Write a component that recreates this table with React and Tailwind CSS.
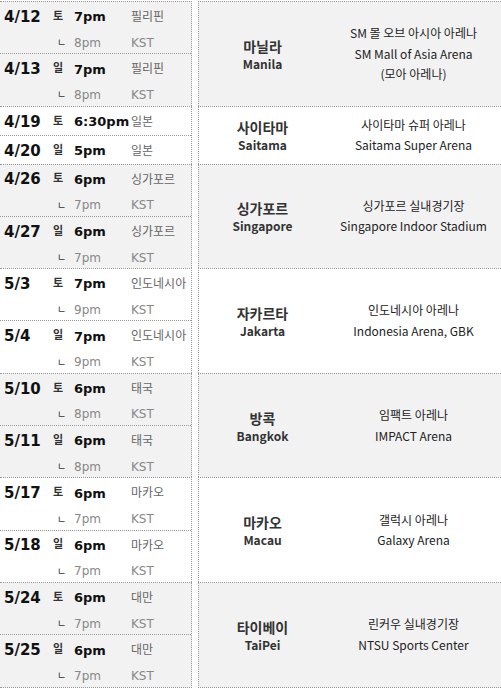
import React from 'react';

const groups = [
  {
    city: '마닐라',
    en: 'Manila',
    venue: ['SM 몰 오브 아시아 아레나', 'SM Mall of Asia Arena', '(모아 아레나)'],
    gray: true,
    rows: [
      { date: '4/12', day: '토', time: '7pm', country: '필리핀', kst: '8pm' },
      { date: '4/13', day: '일', time: '7pm', country: '필리핀', kst: '8pm' },
    ],
  },
  {
    city: '사이타마',
    en: 'Saitama',
    venue: ['사이타마 슈퍼 아레나', 'Saitama Super Arena'],
    rows: [
      { date: '4/19', day: '토', time: '6:30pm', country: '일본' },
      { date: '4/20', day: '일', time: '5pm', country: '일본' },
    ],
  },
  {
    city: '싱가포르',
    en: 'Singapore',
    venue: ['싱가포르 실내경기장', 'Singapore Indoor Stadium'],
    gray: true,
    rows: [
      { date: '4/26', day: '토', time: '6pm', country: '싱가포르', kst: '7pm' },
      { date: '4/27', day: '일', time: '6pm', country: '싱가포르', kst: '7pm' },
    ],
  },
  {
    city: '자카르타',
    en: 'Jakarta',
    venue: ['인도네시아 아레나', 'Indonesia Arena, GBK'],
    rows: [
      { date: '5/3', day: '토', time: '7pm', country: '인도네시아', kst: '9pm' },
      { date: '5/4', day: '일', time: '7pm', country: '인도네시아', kst: '9pm' },
    ],
  },
  {
    city: '방콕',
    en: 'Bangkok',
    venue: ['임팩트 아레나', 'IMPACT Arena'],
    gray: true,
    rows: [
      { date: '5/10', day: '토', time: '6pm', country: '태국', kst: '8pm' },
      { date: '5/11', day: '일', time: '6pm', country: '태국', kst: '8pm' },
    ],
  },
  {
    city: '마카오',
    en: 'Macau',
    venue: ['갤럭시 아레나', 'Galaxy Arena'],
    rows: [
      { date: '5/17', day: '토', time: '6pm', country: '마카오', kst: '7pm' },
      { date: '5/18', day: '일', time: '6pm', country: '마카오', kst: '7pm' },
    ],
  },
  {
    city: '타이베이',
    en: 'TaiPei',
    venue: ['린커우 실내경기장', 'NTSU Sports Center'],
    gray: true,
    rows: [
      { date: '5/24', day: '토', time: '6pm', country: '대만', kst: '7pm' },
      { date: '5/25', day: '일', time: '6pm', country: '대만', kst: '7pm' },
    ],
  },
];

const DateRow = ({ row, first }) => (
  <div className={first ? '' : 'border-t border-dotted border-[#999]'}>
    <div className={`flex items-center pt-[3px] ${row.kst ? 'h-[27px]' : 'h-[28px]'}`}>
      <span className="w-[53px] pl-[4px] text-[15px] font-bold text-[#111]">{row.date}</span>
      <span className="w-[21px] text-[11px] font-bold text-[#333]">{row.day}</span>
      <span className="w-[57px] text-[13px] font-bold text-[#111]">{row.time}</span>
      <span className="text-[12px] text-[#666]">{row.country}</span>
    </div>
    {row.kst ? (
      <div className="flex h-[24.3px] items-center pt-[3px]">
        <span className="w-[53px]" />
        <span className="w-[21px] pl-[4px] text-[10px] text-[#333]">ㄴ</span>
        <span className="w-[57px] text-[12px] text-[#888]">{row.kst}</span>
        <span className="text-[12px] text-[#888]">KST</span>
      </div>
    ) : null}
  </div>
);

export default function App() {
  return (
    <div className="w-[501px] bg-white pt-[1px]">
      {groups.map((g, i) => (
        <div key={g.city} className="flex">
          <div
            className={`w-[192px] border-r border-t border-dotted border-[#999] font-['DejaVu_Sans','Noto_Sans_CJK_KR',sans-serif] ${
              i === groups.length - 1 ? 'border-b' : ''
            } ${g.gray ? 'bg-[#f2f2f2]' : 'bg-white'}`}
          >
            {g.rows.map((r, j) => (
              <DateRow key={r.date} row={r} first={j === 0} />
            ))}
          </div>
          <div className="w-[6px]" />
          <div
            className={`flex flex-1 items-center border-l border-t border-dotted border-[#999] font-['Noto_Sans_CJK_KR',sans-serif] ${
              i === groups.length - 1 ? 'border-b' : ''
            } ${g.gray ? 'bg-[#f2f2f2]' : 'bg-white'}`}
          >
            <div className="flex w-[127px] flex-col items-center">
              <span className="text-[14px] font-bold leading-[20px] text-[#333]">{g.city}</span>
              <span className="text-[12px] font-bold leading-[16px] text-[#333]">{g.en}</span>
            </div>
            <div className="flex flex-1 flex-col items-center">
              {g.venue.map((v) => (
                <span key={v} className="text-[12px] leading-[20.5px] text-[#222]">
                  {v}
                </span>
              ))}
            </div>
          </div>
        </div>
      ))}
    </div>
  );
}
